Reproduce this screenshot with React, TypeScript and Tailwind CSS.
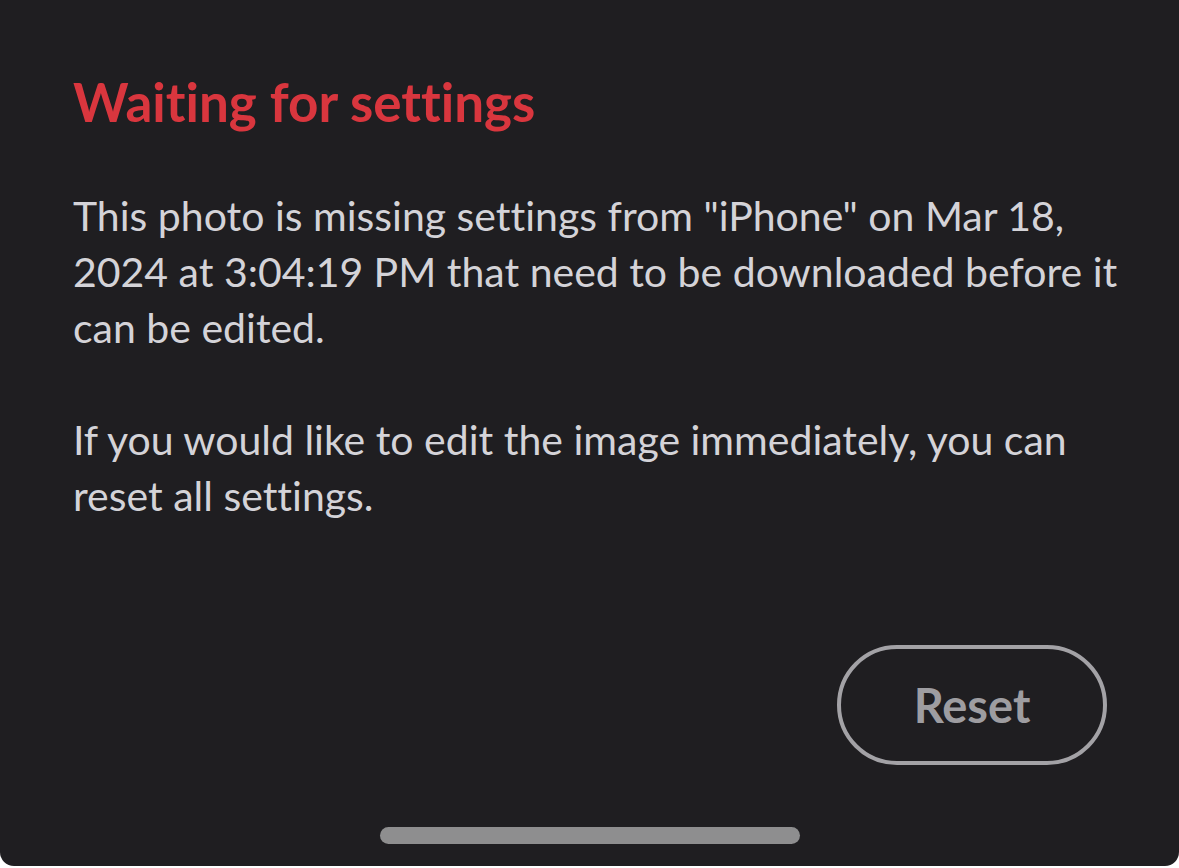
export default function App() {
  return (
    <div className="flex h-[868px] w-[1179px] bg-white">
      <div className="relative flex h-[866px] w-full flex-col rounded-b-[14px] bg-[#1f1e21] pl-[73px] pr-[60px] pt-[70px] font-['Lato',sans-serif] [font-variant-ligatures:none]">
        <h1 className="text-[53px] font-bold leading-[64px] text-[#d9363e]">
          Waiting for settings
        </h1>

        <div className="mt-[54px] space-y-[56px] text-[41px] leading-[56px] text-[#d4d3d8]">
          <p>
            This photo is missing settings from "iPhone" on Mar 18,
            <br />
            2024 at 3:04:19&#8239;PM that need to be downloaded before it
            <br />
            can be edited.
          </p>
          <p>
            If you would like to edit the image immediately, you can
            <br />
            reset all settings.
          </p>
        </div>

        <div className="mt-auto flex justify-end pb-[101px] pr-[12px]">
          <button className="flex h-[120px] w-[270px] items-center justify-center rounded-full border-4 border-[#a3a2a6] text-[47px] font-bold text-[#9e9da1]">
            Reset
          </button>
        </div>

        <div className="absolute bottom-[22px] left-[380px] h-[17px] w-[420px] rounded-full bg-[#8e8e8f]" />
      </div>
    </div>
  );
}
